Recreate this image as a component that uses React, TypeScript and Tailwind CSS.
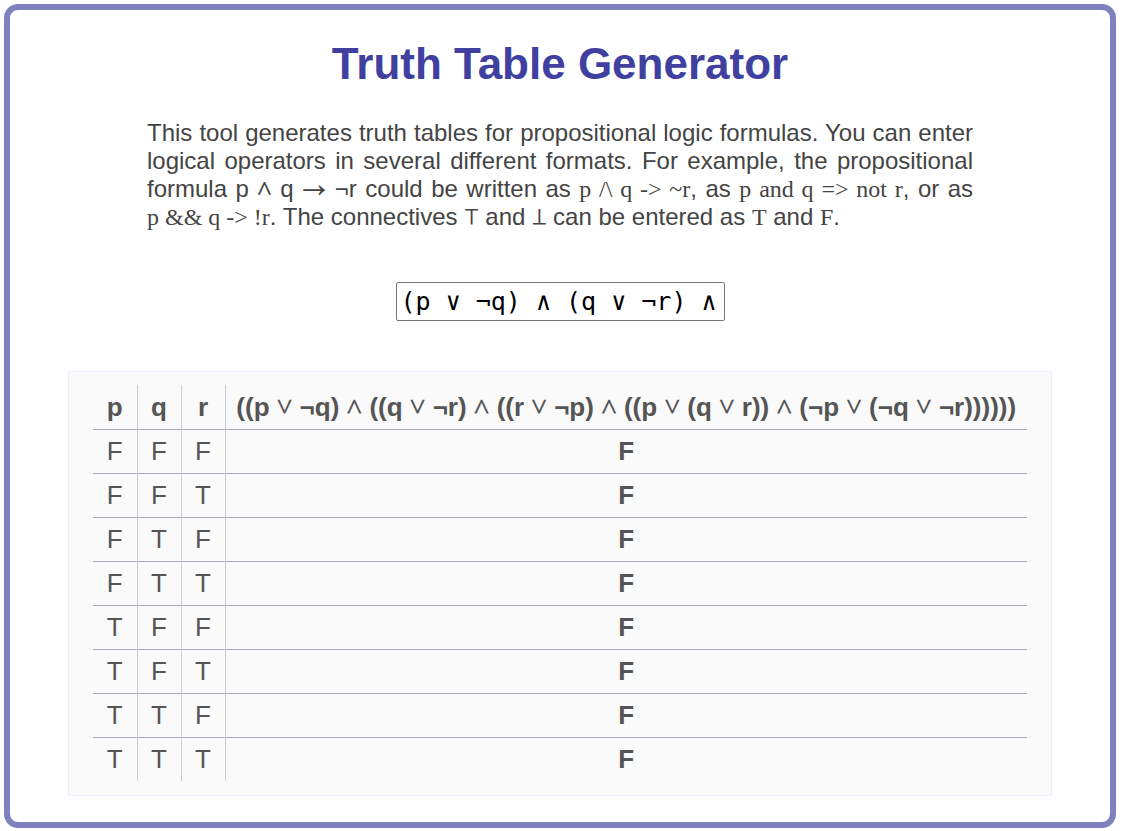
import { useState, type ReactNode } from "react";

const variables = ["p", "q", "r"];
const formula =
  "((p ∨ ¬q) ∧ ((q ∨ ¬r) ∧ ((r ∨ ¬p) ∧ ((p ∨ (q ∨ r)) ∧ (¬p ∨ (¬q ∨ ¬r))))))";

const evaluate = ([p, q, r]: boolean[]) =>
  (p || !q) && (q || !r) && (r || !p) && (p || q || r) && (!p || !q || !r);

const rows = Array.from({ length: 8 }, (_, i) =>
  [4, 2, 1].map((bit) => (i & bit) !== 0)
);

const letter = (value: boolean) => (value ? "T" : "F");

function Code({ children }: { children: ReactNode }) {
  return (
    <code className="font-['Liberation_Serif',serif] whitespace-nowrap">{children}</code>
  );
}

function Sym({ children }: { children: ReactNode }) {
  return (
    <span className="font-['Noto_Sans_Mono',monospace] leading-none font-normal">{children}</span>
  );
}

export default function App() {
  const [input, setInput] = useState(
    "(p ∨ ¬q) ∧ (q ∨ ¬r) ∧ (r ∨ ¬p) ∧ (p ∨ q ∨ r) ∧ (¬p ∨ ¬q ∨ ¬r)"
  );

  return (
    <div className="bg-white pt-1 pr-1.5 pb-1 pl-1 font-['Liberation_Sans','DejaVu_Sans',sans-serif]">
      <main className="flex flex-col items-center rounded-[14px] border-[6px] border-[#8080c0] px-[58px] pt-7 pb-[26px]">
        <h1 className="text-center text-[44px] leading-[52px] font-bold text-[#4040a0]">
          Truth Table Generator
        </h1>
        <p className="mt-[29px] w-full max-w-[826px] text-justify text-[24px] leading-7 text-[#444444]">
          This tool generates truth tables for propositional logic formulas. You can enter
          logical operators in several different formats. For example, the propositional
          formula p <Sym>∧</Sym> q{" "}
          <span className="font-['Noto_Sans_Math',sans-serif] leading-none">→</span> ¬r
          could be written as <Code>{"p /\\ q -> ~r"}</Code>, as{" "}
          <Code>{"p and q => not r"}</Code>, or as <Code>{"p && q -> !r"}</Code>. The
          connectives <Sym>⊤</Sym> and <Sym>⊥</Sym> can be entered as <Code>T</Code> and{" "}
          <Code>F</Code>.
        </p>
        <input
          type="text"
          aria-label="Formula"
          value={input}
          onChange={(e) => setInput(e.target.value)}
          className="mt-[51px] h-[39px] w-[329px] rounded-[2px] border border-[#767676] bg-white px-1 font-['DejaVu_Sans_Mono',monospace] text-[25px] text-black"
        />
        <section className="mt-[50px] w-full border border-[#eeeeff] bg-[#fafafa] px-6 pt-[13px] pb-3.5">
          <table className="w-full table-fixed border-collapse text-center text-[26px] leading-8 text-[#555555]">
            <thead>
              <tr className="h-11 border-b border-[#aaaabb]">
                {variables.map((v) => (
                  <th key={v} scope="col" className="w-11 border-r border-[#ccccdd] p-0">
                    {v}
                  </th>
                ))}
                <th scope="col" className="p-0 whitespace-nowrap">
                  {formula
                    .split(/([∧∨])/)
                    .map((part, i) => (i % 2 ? <Sym key={i}>{part}</Sym> : part))}
                </th>
              </tr>
            </thead>
            <tbody>
              {rows.map((values, i) => (
                <tr key={i} className="h-11 border-b border-[#aaaabb] last:border-b-0">
                  {values.map((value, j) => (
                    <td key={j} className="border-r border-[#ccccdd] p-0">
                      {letter(value)}
                    </td>
                  ))}
                  <td className="p-0 font-bold">{letter(evaluate(values))}</td>
                </tr>
              ))}
            </tbody>
          </table>
        </section>
      </main>
    </div>
  );
}
